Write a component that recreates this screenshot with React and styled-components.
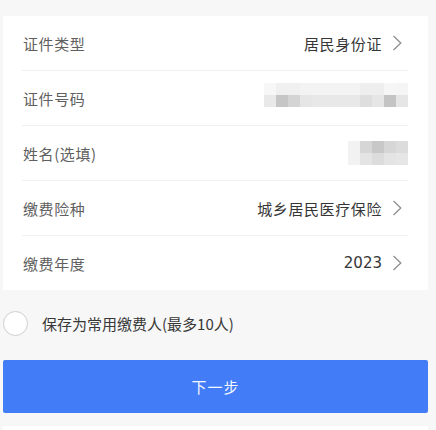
import React from 'react';
import styled, { createGlobalStyle } from 'styled-components';

const GlobalStyle = createGlobalStyle`
  html, body {
    margin: 0;
    padding: 0;
    background: #f7f7f7;
    font-family: "Noto Sans CJK SC", "Noto Sans", sans-serif;
  }
`;

const Page = styled.div`
  padding: 16px 8px 0 3px;
  display: flex;
  flex-direction: column;
`;

const Card = styled.div`
  background: #fff;
  display: flex;
  flex-direction: column;
`;

const Row = styled.div`
  height: 54px;
  margin: 0 20px 0 19px;
  padding: 0 6px 0 1px;
  display: flex;
  align-items: center;
  justify-content: space-between;
  border-bottom: ${({ last }) => (last ? 'none' : '1px solid #f0f0f0')};
  box-sizing: content-box;
`;

const Label = styled.span`
  font-size: 15px;
  color: #606060;
  letter-spacing: 0.6px;
`;

const Value = styled.div`
  display: flex;
  align-items: center;
  gap: 10px;
  font-size: 15px;
  color: #363636;
  letter-spacing: 0.6px;
`;

const Year = styled.span`
  font-family: "DejaVu Sans", sans-serif;
  letter-spacing: 0;
`;

const Mosaic = styled.div`
  display: grid;
  grid-template-columns: repeat(${({ cols }) => cols}, 12px);
  grid-auto-rows: 12px;
  margin-right: -6px;
  margin-bottom: ${({ lift }) => lift || 0}px;
`;

const Cell = styled.div`
  background: ${({ c }) => c};
`;

const Chevron = () => (
  <svg width="10" height="16" viewBox="0 0 10 16">
    <path d="M1.5 1 L8.8 8 L1.5 15" fill="none" stroke="#8f8f8f" strokeWidth="1.3" />
  </svg>
);

const SaveRow = styled.label`
  height: 70px;
  display: flex;
  align-items: center;
  gap: 14px;
  font-size: 15px;
  color: #383838;
  margin-top: -2px;
`;

const Radio = styled.span`
  width: 23px;
  height: 23px;
  border-radius: 50%;
  border: 1px solid #cfcfcf;
  background: #fff;
`;

const NextButton = styled.button`
  height: 53px;
  border: none;
  border-radius: 2px;
  background: #427cf7;
  color: #f4f7ff;
  font-family: inherit;
  font-size: 15px;
  letter-spacing: 1px;
  margin-top: 2px;
`;

const BottomCard = styled.div`
  margin-top: 13px;
  height: 20px;
  background: #fff;
`;

const idCells = [
  '#f7f7f7', '#f0f0f0', '#f0f0f0', '#f3f3f3', '#f3f3f3', '#f3f3f3', '#f3f3f3', '#f3f3f3', '#eeeeee', '#eeeeee', '#f6f6f6', '#f5f5f5',
  '#e9e9e9', '#c6c6c6', '#d4d4d4', '#e6e6e6', '#e8e8e8', '#e8e8e8', '#e8e8e8', '#e8e8e8', '#dedede', '#e6e6e6', '#c4c4c4', '#e6e6e6',
];

const nameCells = [
  '#f2f2f2', '#d6d6d6', '#c8c8c8', '#d6d6d6', '#dcdcdc',
  '#f2f2f2', '#e4e4e4', '#dcdcdc', '#e4e4e4', '#e6e6e6',
];

const App = () => {
  return (
    <Page>
      <GlobalStyle />
      <Card>
        <Row>
          <Label>证件类型</Label>
          <Value>
            居民身份证
            <Chevron />
          </Value>
        </Row>
        <Row>
          <Label>证件号码</Label>
          <Mosaic cols={12} lift={6}>
            {idCells.map((c, i) => (
              <Cell key={i} c={c} />
            ))}
          </Mosaic>
        </Row>
        <Row>
          <Label>姓名(选填)</Label>
          <Mosaic cols={5}>
            {nameCells.map((c, i) => (
              <Cell key={i} c={c} />
            ))}
          </Mosaic>
        </Row>
        <Row>
          <Label>缴费险种</Label>
          <Value>
            城乡居民医疗保险
            <Chevron />
          </Value>
        </Row>
        <Row last>
          <Label>缴费年度</Label>
          <Value>
            <Year>2023</Year>
            <Chevron />
          </Value>
        </Row>
      </Card>
      <SaveRow>
        <Radio />
        保存为常用缴费人(最多10人)
      </SaveRow>
      <NextButton>下一步</NextButton>
      <BottomCard />
    </Page>
  );
};

export default App;
